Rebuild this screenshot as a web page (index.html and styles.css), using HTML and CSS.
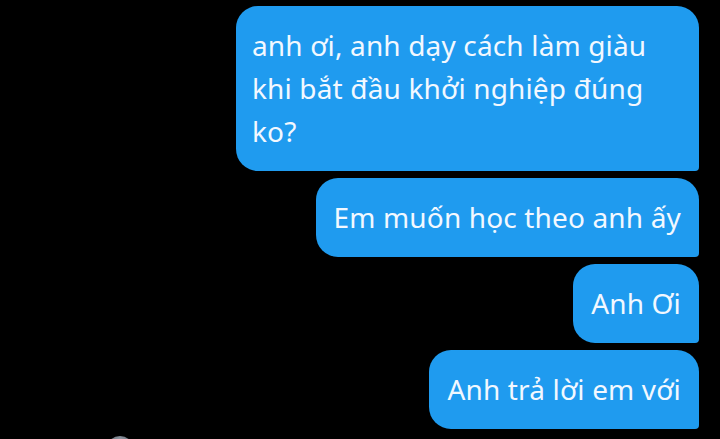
FILE: index.html
```html
<!DOCTYPE html>
<html lang="vi">
<head>
<meta charset="utf-8">
<link rel="stylesheet" href="styles.css">
</head>
<body>
<div class="chat">
  <div class="bubble wide">anh ơi, anh dạy cách làm giàu khi bắt đầu khởi nghiệp đúng ko?</div>
  <div class="bubble">Em muốn học theo anh ấy</div>
  <div class="bubble">Anh Ơi</div>
  <div class="bubble">Anh trả lời em với</div>
  <div class="avatar-row"><div class="avatar"></div></div>
</div>
</body>
</html>
```

FILE: styles.css
```css
html, body {
  margin: 0;
  padding: 0;
  background: #000;
  height: 100%;
  overflow: hidden;
}
.chat {
  box-sizing: border-box;
  height: 100vh;
  overflow: hidden;
  display: flex;
  flex-direction: column;
  align-items: flex-end;
  gap: 7px;
  padding: 6px 21px 0 0;
  font-family: "Noto Sans", "Open Sans", sans-serif;
}
.bubble {
  flex: none;
  box-sizing: border-box;
  background: #1f9bef;
  color: #f2f8ff;
  font-size: 28px;
  letter-spacing: 0.15px;
  line-height: 43px;
  padding: 18px 18px;
  border-radius: 22px 22px 4px 22px;
}
.wide {
  width: 463px;
  padding-left: 16px;
}
.avatar-row {
  flex: none;
  align-self: stretch;
  padding-left: 106px;
}
.avatar {
  width: 28px;
  height: 28px;
  border-radius: 50%;
  background: radial-gradient(circle at 50% 20%, #9aa3af, #3c424a 70%);
}
```
